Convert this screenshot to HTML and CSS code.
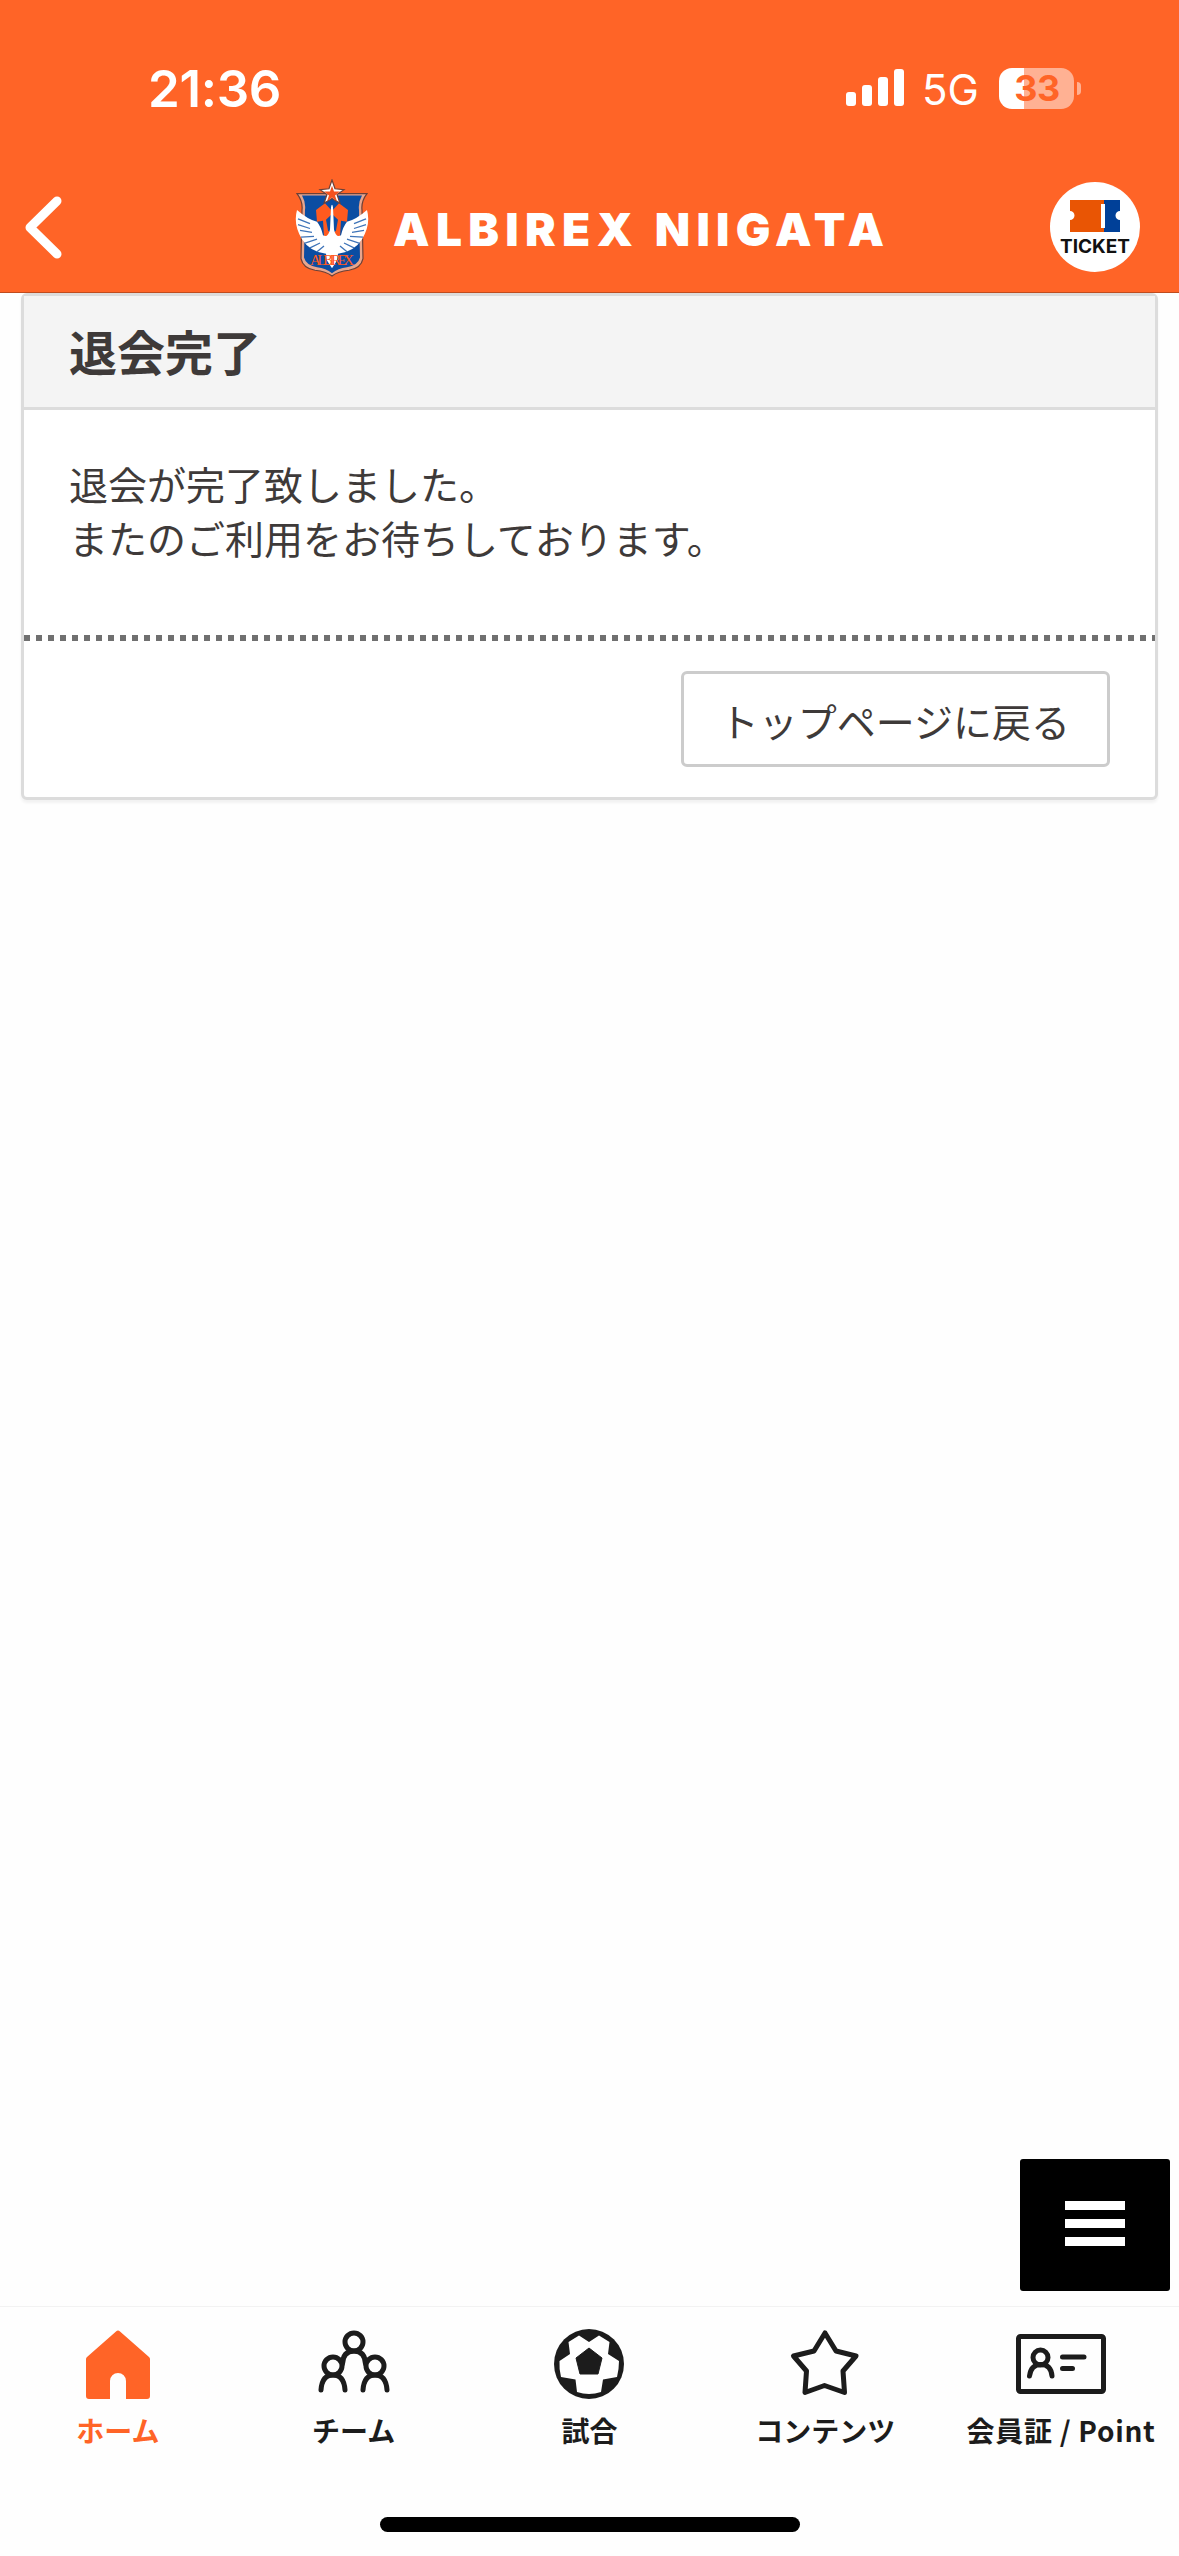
FILE: index.html
```html
<!DOCTYPE html>
<html lang="ja">
<head>
    <meta charset="UTF-8">
    <meta name="viewport" content="width=device-width, initial-scale=1.0">
    <title>退会完了</title>
    <link rel="stylesheet" href="styles.css">
</head>
<body>
    <header class="header">
        <div class="status-bar">
            <div class="time">21:36</div>
            <div class="status-icons">
                <svg class="signal" width="58" height="38" viewBox="0 0 58 38" fill="#fff">
                    <rect x="0" y="23" width="10" height="14" rx="3"/>
                    <rect x="16" y="16" width="10" height="21" rx="3"/>
                    <rect x="32" y="8" width="10" height="29" rx="3"/>
                    <rect x="48" y="0" width="10" height="37" rx="3"/>
                </svg>
                <span class="network">5G</span>
                <div class="battery">33</div>
                <div class="battery-cap"></div>
            </div>
        </div>

        <div class="nav-bar">
            <a href="#" class="back">
                <svg width="38" height="64" viewBox="0 0 38 64" fill="none" stroke="#fff" stroke-width="9" stroke-linecap="round" stroke-linejoin="round">
                    <path d="M33 6 L6 32.500 L33 59"/>
                </svg>
            </a>

            <div class="brand">
                <svg class="emblem" width="74" height="99" viewBox="0 0 74 102" preserveAspectRatio="none">
                    <path d="M2 15 H72 Q66 23 67 32 L68 82 Q66 92 54 94 Q43 95 37 100 Q31 95 20 94 Q8 92 6 82 L7 32 Q8 23 2 15Z" fill="#e8a58c" stroke="#6b4038" stroke-width="1.200"/>
                    <path d="M7 17 H67 Q63 24 64 32 L65 81 Q63 89 52 91 Q43 92 37 97 Q31 92 22 91 Q11 89 9 81 L10 32 Q11 24 7 17Z" fill="#0b4da2"/>
                    <path d="M21 32 L30 25 L38 34 L38 55 L34 60 L29 59 L28 43 L22 44Z M53 32 L44 25 L36 34 L36 55 L40 60 L45 59 L46 43 L52 44Z" fill="#ff5a1f"/>
                    <path d="M37 36 L43 42 L41 53 L37 58 L33 53 L31 42Z" fill="#0b4da2"/>
                    <path d="M2 32 Q13 42 22 44 Q26 49 28 58 Q33 61 35 52 L36 29 Q37 24 38 29 L39 52 Q41 61 46 58 Q48 49 52 44 Q61 42 72 32 Q76 47 67 62 Q59 75 43 77 L42 84 L37 92 L32 84 L31 77 Q15 75 7 62 Q-2 47 2 32Z" fill="#fff"/>
                    <path d="M3 41 L15 46 M3 47 L15 51 M5 53 L17 55 M6 60 L19 59 M10 66 L22 62 M15 71 L25 66 M22 75 L29 69 M71 41 L59 46 M71 47 L59 51 M69 53 L57 55 M68 60 L55 59 M64 66 L52 62 M59 71 L49 66 M52 75 L45 69" stroke="#3f74b8" stroke-width="1.300"/>
                    <text x="37" y="89" text-anchor="middle" textLength="44" class="emblem-text">ALBIREX</text>
                    <path d="M37 1 L40 10 L49 11 L42 16 L45 25 L37 20 L29 25 L32 16 L25 11 L34 10Z" fill="#fff" stroke="#6b4038" stroke-width="1.200"/>
                    <path d="M37 7 L39 13 L45 13 L40 17 L42 23 L37 19 L32 23 L34 17 L29 13 L35 13Z" fill="#f4511e"/>
                </svg>
                <svg width="493" height="60" viewBox="0 0 493 60">
                    <text x="0" y="48" textLength="491" class="brand-name">ALBIREX NIIGATA</text>
                </svg>
            </div>

            <a href="#" class="ticket">
                <svg width="50" height="32" viewBox="0 0 50 32">
                    <path d="M0 0 H34 V32 H0 V20 A4.500 4.500 0 0 0 0 11Z" fill="#e95504"/>
                    <path d="M34 0 H50 V11 A4.500 4.500 0 0 0 50 20 V32 H34Z" fill="#004098"/>
                    <rect x="31" y="4" width="4" height="24" fill="#fff"/>
                </svg>
                <span>TICKET</span>
            </a>
        </div>
    </header>

    <main class="card">
        <h1>退会完了</h1>
        <p class="message">退会が完了致しました。<br>またのご利用をお待ちしております。</p>
        <div class="card-footer">
            <a href="#" class="btn">トップページに戻る</a>
        </div>
    </main>

    <button class="menu-btn">
        <span></span>
        <span></span>
        <span></span>
    </button>

    <footer class="bottom">
        <nav class="tabs">
            <a href="#" class="tab active">
                <svg width="90" height="78" viewBox="0 0 90 78">
                    <path d="M43 5.500 Q45 3.500 47 5.500 L76 31 Q77 32 77 33 V70 Q77 73 74 73 H53 V55 A8 8 0 0 0 37 55 V73 H16 Q13 73 13 70 V33 Q13 32 14 31Z" fill="#ff6427"/>
                </svg>
                <span>ホーム</span>
            </a>
            <a href="#" class="tab">
                <svg width="90" height="78" viewBox="0 0 90 78" fill="none" stroke="#1c1c1c" stroke-width="5" stroke-linecap="round">
                    <circle cx="45" cy="16" r="9"/>
                    <circle cx="24" cy="40" r="9"/>
                    <circle cx="66" cy="40" r="9"/>
                    <path d="M33.500 38 Q34 25 45 25 Q56 25 56.500 38"/>
                    <path d="M12 64 Q13 49 24 49 Q35 49 36 64"/>
                    <path d="M54 64 Q55 49 66 49 Q77 49 78 64"/>
                </svg>
                <span>チーム</span>
            </a>
            <a href="#" class="tab">
                <svg width="90" height="78" viewBox="0 0 90 78">
                    <circle cx="45" cy="38" r="35" fill="#1c1c1c"/>
                    <path d="M45 16 L55 9.500 L65.500 16 L64 28 L75 35 Q75 43 73 51 L59 53.500 L57 66 Q45 70 33 66 L31.500 53.500 L17 51 Q15 43 15.500 35 L26 28 L24.500 16 L35 9.500Z" fill="#fff"/>
                    <path d="M45 22 L58 32 L54 48 H36 L32 32Z" fill="#1c1c1c" stroke="#1c1c1c" stroke-width="1" stroke-linejoin="round"/>
                </svg>
                <span>試合</span>
            </a>
            <a href="#" class="tab">
                <svg width="90" height="78" viewBox="0 0 90 78" fill="none" stroke="#1c1c1c" stroke-width="5" stroke-linejoin="round">
                    <path d="M45 7 L56 25 L76 30 L63 45 L64.500 66.500 L44.500 59.500 L25 66.500 L26.500 45 L13.500 30 L34 25Z"/>
                </svg>
                <span>コンテンツ</span>
            </a>
            <a href="#" class="tab">
                <svg width="90" height="78" viewBox="0 0 90 78" fill="none" stroke="#1c1c1c" stroke-width="5" stroke-linecap="round">
                    <rect x="2.500" y="10.500" width="85" height="55" rx="2"/>
                    <circle cx="24.500" cy="31.500" r="7.500"/>
                    <path d="M13.500 50 Q15 38.500 25 38.500 Q35 38.500 36 50"/>
                    <path d="M46.500 31 H68 M46.500 42.500 H56.500"/>
                </svg>
                <span class="wide">会員証 / Point</span>
            </a>
        </nav>
        <div class="home-indicator"></div>
    </footer>
</body>
</html>
```
FILE: styles.css
```css
* {
    box-sizing: border-box;
}

body {
    margin: 0;
    height: 2556px;
    display: flex;
    flex-direction: column;
    background-color: #fefefe;
    color: #3e3a39;
    font-family: "Noto Sans CJK JP", sans-serif;
    overflow: hidden;
}

a {
    color: inherit;
    text-decoration: none;
}

svg {
    display: block;
}

/* Header */
.header {
    height: 293px;
    flex-shrink: 0;
    background-color: #ff6427;
    border-bottom: 1px solid #bf4c1e;
    color: #fff;
}

.status-bar {
    height: 176px;
    padding: 0 98px 0 148px;
    display: flex;
    justify-content: space-between;
    align-items: center;
    font-family: Inter, sans-serif;
}

.time {
    font-size: 51px;
    font-weight: 600;
    letter-spacing: -0.3px;
}

.status-icons {
    display: flex;
    align-items: center;
}

.network {
    width: 56px;
    margin: 3px 21px 0 18px;
    font-size: 42px;
}

.battery {
    width: 75px;
    height: 41px;
    padding-left: 1px;
    border-radius: 13px;
    background: linear-gradient(to right, #fff 25px, #ffb193 25px);
    color: #ff6427;
    font-size: 36px;
    font-weight: 700;
    line-height: 41px;
    letter-spacing: -0.5px;
    text-align: center;
}

.battery-cap {
    width: 4px;
    height: 13px;
    margin-left: 3px;
    border-radius: 0 8px 8px 0;
    background-color: #ffb193;
}

.nav-bar {
    height: 102px;
    padding: 0 39px 0 24px;
    display: flex;
    justify-content: space-between;
    align-items: center;
}

.back {
    width: 107px;
}

.brand {
    padding-top: 2px;
    display: flex;
    align-items: center;
    gap: 24px;
}

.emblem-text {
    font-family: "Liberation Serif", serif;
    font-size: 15px;
    fill: #ff5a1f;
}

.brand-name {
    font-family: Inter, sans-serif;
    font-size: 46px;
    font-weight: 900;
    fill: #fff;
}

.ticket {
    width: 90px;
    height: 90px;
    padding-top: 18px;
    display: flex;
    flex-direction: column;
    align-items: center;
    border-radius: 50%;
    background-color: #fff;
    color: #111;
    font-family: Inter, sans-serif;
    font-size: 19px;
    font-weight: 700;
    line-height: 29px;
}

/* Card */
.card {
    margin: 0 21px;
    border: 3px solid #dcdcdc;
    border-radius: 6px;
    background-color: #fff;
    box-shadow: 0 3px 3px rgba(0, 0, 0, 0.05);
}

h1 {
    height: 114px;
    margin: 0;
    padding-left: 45px;
    border-bottom: 3px solid #dcdcdc;
    background-color: #f4f4f4;
    font-size: 48px;
    font-weight: 700;
    line-height: 109px;
}

.message {
    height: 225px;
    margin: 0;
    padding: 46px 45px 0;
    font-size: 39px;
    line-height: 54px;
}

.card-footer {
    height: 162px;
    padding: 36px 45px 0;
    display: flex;
    justify-content: flex-end;
    align-items: flex-start;
    background: repeating-linear-gradient(to right, #707070 0 6px, transparent 6px 12px) top / 100% 6px no-repeat;
}

.btn {
    height: 96px;
    padding: 0 37px 0 36px;
    border: 3px solid #ccc;
    border-radius: 6px;
    font-size: 39px;
    line-height: 92px;
}

/* Floating menu */
.menu-btn {
    position: absolute;
    right: 9px;
    top: 2159px;
    width: 150px;
    height: 132px;
    padding: 0 0 3px;
    display: flex;
    flex-direction: column;
    justify-content: center;
    align-items: center;
    gap: 9px;
    border: none;
    border-radius: 3px;
    background-color: #000;
}

.menu-btn span {
    width: 60px;
    height: 9px;
    background-color: #fff;
}

/* Bottom tabs */
.bottom {
    height: 250px;
    margin-top: auto;
    display: flex;
    flex-direction: column;
    align-items: center;
    border-top: 1px solid #f2f2f2;
}

.tabs {
    width: 100%;
    height: 210px;
    padding-top: 19px;
    display: grid;
    grid-template-columns: repeat(5, minmax(0, 1fr));
}

.tab {
    display: flex;
    flex-direction: column;
    align-items: center;
    color: #1c1c1c;
    font-size: 28px;
    font-weight: 700;
    line-height: 38px;
    white-space: nowrap;
}

.tab span {
    margin-top: 7px;
}

.tab .wide {
    letter-spacing: 0.7px;
}

.active {
    color: #ff6427;
}

.home-indicator {
    width: 420px;
    height: 15px;
    border-radius: 8px;
    background-color: #000;
}
```
